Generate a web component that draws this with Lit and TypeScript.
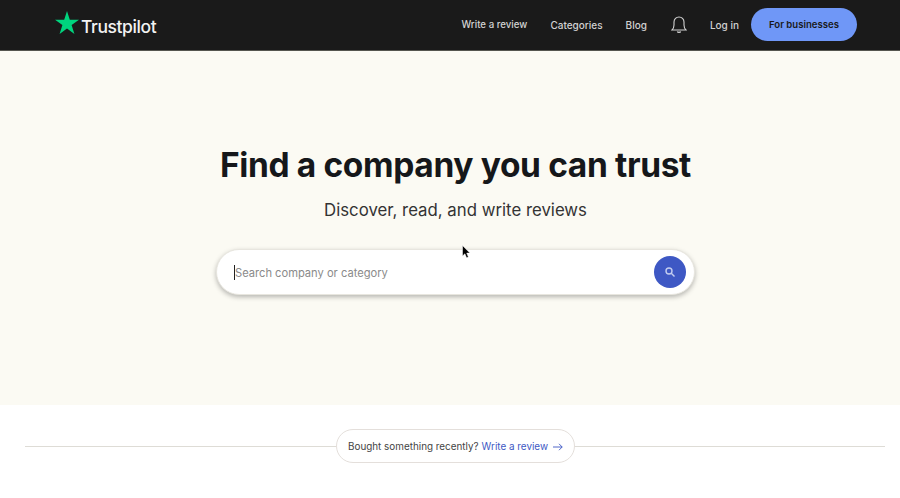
import { LitElement, html, css } from 'lit';
import { customElement } from 'lit/decorators.js';

@customElement('app-root')
export class AppRoot extends LitElement {
  static styles = css`
    :host {
      display: block;
      height: 498px;
      overflow: hidden;
      position: relative;
      background: #fff;
      font-family: Inter, 'Liberation Sans', sans-serif;
      color: #1c1c1c;
    }

    .topbar {
      height: 49px;
      background: #1a1a1a;
      border-bottom: 1px solid #55554f;
      display: flex;
      align-items: center;
      padding: 0 43px 1px 55px;
    }

    .logo {
      display: flex;
      align-items: center;
      gap: 2px;
      margin-top: 1px;
      color: #f2f2f2;
      font-size: 17.5px;
      font-weight: 500;
      letter-spacing: -0.4px;
    }

    .logo svg {
      display: block;
      margin-top: -5px;
    }

    .logo span {
      margin-top: 2px;
    }

    nav {
      margin-left: auto;
      display: flex;
      align-items: center;
      color: #d2d2d2;
      font-size: 10px;
      font-weight: 500;
    }

    nav a {
      white-space: nowrap;
    }

    .review,
    .cats {
      margin-right: 23px;
    }

    .review {
      font-size: 9.7px;
    }

    .blog {
      margin-right: 24px;
    }

    .bell {
      display: block;
      margin-right: 23px;
    }

    .login {
      margin-right: 12px;
    }

    .biz {
      width: 106px;
      height: 33px;
      border-radius: 17px;
      background: #6f97f7;
      color: #1a1a1a;
      display: flex;
      align-items: center;
      justify-content: center;
      font-size: 9.6px;
      font-weight: 600;
    }

    .hero {
      height: 354px;
      background: #fbfaf3;
      display: flex;
      flex-direction: column;
      align-items: center;
      box-sizing: border-box;
      padding: 93px 0 0 11px;
    }

    h1 {
      margin: 0;
      font-size: 33.5px;
      line-height: 42px;
      font-weight: 700;
      letter-spacing: -0.36px;
      color: #15171a;
    }

    .sub {
      margin: 12px 0 0;
      font-size: 16.8px;
      line-height: 24px;
      color: #333;
    }

    .search {
      margin-top: 27px;
      width: 479px;
      height: 46px;
      box-sizing: border-box;
      border-radius: 23px;
      background: #fff;
      border: 1px solid #e8e6df;
      box-shadow: 0 2px 5px rgba(0, 0, 0, 0.28);
      display: flex;
      align-items: center;
      padding: 0 8px 0 17px;
    }

    .caret {
      width: 1px;
      height: 15px;
      background: #222;
    }

    .placeholder {
      padding-top: 2px;
      font-size: 11.15px;
      color: #8a8a8a;
    }

    .go {
      margin-left: auto;
      width: 32px;
      height: 32px;
      border-radius: 50%;
      background: #3e58c4;
      display: flex;
      align-items: center;
      justify-content: center;
    }

    .bought {
      height: 93px;
      padding: 0 14px 0 25px;
      display: flex;
      justify-content: center;
      position: relative;
    }

    .rule {
      position: absolute;
      left: 25px;
      right: 15px;
      top: 41px;
      height: 1px;
      background: #dedcd6;
    }

    .pill {
      position: relative;
      height: 34px;
      box-sizing: border-box;
      margin-top: 24px;
      padding: 0 11px;
      border: 1px solid #e4dfdb;
      border-radius: 17px;
      background: #fff;
      display: flex;
      align-items: center;
      gap: 3px;
      font-size: 9.9px;
      color: #444;
      white-space: nowrap;
    }

    .pill a {
      color: #3e58c4;
      display: flex;
      align-items: center;
      gap: 5px;
    }

    .pill svg {
      margin-top: 2px;
    }

    .pointer {
      position: absolute;
      left: 462px;
      top: 245px;
    }
  `;

  render() {
    return html`
      <header class="topbar">
        <div class="logo">
          <svg width="24" height="23" viewBox="0 0 24 23">
            <path fill="#00d47e" d="M12 0l2.8 8.7H24l-7.4 5.4 2.8 8.9L12 17.6 4.6 23l2.8-8.9L0 8.7h9.2z" />
          </svg>
          <span>Trustpilot</span>
        </div>
        <nav>
          <a class="review">Write a review</a>
          <a class="cats">Categories</a>
          <a class="blog">Blog</a>
          <svg class="bell" width="16" height="19" viewBox="0 0 16 19" fill="none" stroke="#d2d2d2" stroke-width="1.1">
            <path d="M1 15h14c-1.4-1.4-2-2.6-2-5V7A5 5 0 0 0 3 7v3c0 2.4-.6 3.6-2 5z" />
            <path d="M6.3 16.5c.3 1.2 3.1 1.2 3.4 0" />
          </svg>
          <a class="login">Log in</a>
          <a class="biz">For businesses</a>
        </nav>
      </header>
      <section class="hero">
        <h1>Find a company you can trust</h1>
        <p class="sub">Discover, read, and write reviews</p>
        <div class="search">
          <span class="caret"></span>
          <span class="placeholder">Search company or category</span>
          <div class="go">
            <svg width="12" height="12" viewBox="0 0 12 12" fill="none" stroke="#c3cdf0" stroke-width="1.4">
              <circle cx="5" cy="5" r="3" />
              <path d="M7.3 7.3L10.5 10.5" />
            </svg>
          </div>
        </div>
      </section>
      <section class="bought">
        <div class="rule"></div>
        <div class="pill">
          Bought something recently?
          <a>
            Write a review
            <svg width="10" height="8" viewBox="0 0 10 8" fill="none" stroke="#3e58c4" stroke-width="0.9">
              <path d="M0 4h9.2M6 .8L9.2 4 6 7.2" />
            </svg>
          </a>
        </div>
      </section>
      <svg class="pointer" width="9" height="14" viewBox="0 0 9 14">
        <path fill="#000" stroke="#fff" stroke-width="0.5" d="M0.5 0.5v10.5l2.4-2.2 1.7 4 1.8-.8-1.7-3.9h3.2z" />
      </svg>
    `;
  }
}

declare global {
  interface HTMLElementTagNameMap {
    'app-root': AppRoot;
  }
}
